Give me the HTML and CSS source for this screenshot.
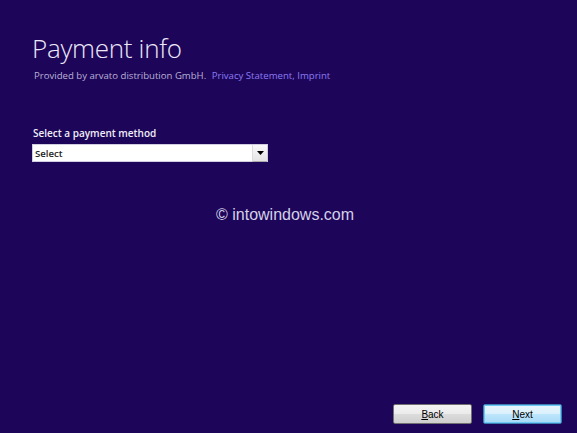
FILE: index.html
```html
<!DOCTYPE html>
<html>
<head>
<meta charset="utf-8">
<link rel="stylesheet" href="styles.css">
</head>
<body>
<div class="page">
  <header class="head">
    <h1 class="title">Payment info</h1>
    <p class="sub">Provided by arvato distribution GmbH. <a class="link">Privacy Statement, Imprint</a></p>
  </header>
  <section class="form">
    <div class="label">Select a payment method</div>
    <div class="combo">
      <span class="combo-text">Select</span>
      <span class="combo-btn"><svg width="7" height="4" viewBox="0 0 7 4"><path d="M0 0H7L3.5 4Z" fill="#000"/></svg></span>
    </div>
  </section>
  <div class="mark">© intowindows.com</div>
  <div class="spacer"></div>
  <footer class="foot">
    <button class="btn"><u>B</u>ack</button>
    <button class="btn btn-primary"><u>N</u>ext</button>
  </footer>
</div>
</body>
</html>
```
FILE: styles.css
```css
html, body {
  margin: 0;
  padding: 0;
  background: #1d0559;
  width: 577px;
  height: 433px;
  overflow: hidden;
}
.page {
  height: 433px;
  display: flex;
  flex-direction: column;
  padding: 0 0 0 32px;
  box-sizing: border-box;
  font-family: "Open Sans", "DejaVu Sans", sans-serif;
}
.head {
  padding-top: 30px;
}
.title {
  margin: 0;
  font-family: "Open Sans", sans-serif;
  font-weight: 300;
  font-size: 26px;
  line-height: 36px;
  color: #ece8f8;
  letter-spacing: -0.3px;
}
.sub {
  margin: 3px 0 0 2px;
  font-size: 9.6px;
  line-height: 13px;
  color: #b9b2d6;
}
.link {
  color: #8b7cf2;
  margin-left: 3px;
}
.form {
  margin-top: 45px;
}
.label {
  font-size: 10px;
  line-height: 13px;
  color: #f0eef8;
  font-weight: 600;
  padding-left: 1px;
}
.combo {
  margin-top: 4px;
  width: 236px;
  height: 18px;
  background: #fff;
  border: 1px solid #cfcfe0;
  box-sizing: border-box;
  display: flex;
  align-items: center;
  justify-content: space-between;
}
.combo-text {
  font-size: 9.6px;
  color: #222;
  padding-left: 2px;
  font-weight: 600;
}
.combo-btn {
  width: 14px;
  height: 16px;
  border-left: 1px solid #ddd;
  background: linear-gradient(#fafafa, #e4e4e4);
  display: flex;
  align-items: center;
  justify-content: center;
  border-bottom: 1px solid #aaa;
}
.mark {
  margin-top: 44px;
  margin-left: 184px;
  font-family: "Liberation Sans", Arial, sans-serif;
  font-size: 16px;
  color: #d4d0e8;
}
.spacer {
  flex: 1;
}
.foot {
  display: flex;
  justify-content: flex-end;
  gap: 11px;
  padding: 0 15px 9px 0;
}
.btn {
  width: 79px;
  height: 20px;
  border: 1px solid #707070;
  border-radius: 2px;
  background: linear-gradient(#f4f4f4 0%, #ebebeb 50%, #dcdcdc 51%, #cfcfcf 100%);
  font-family: "Liberation Sans", Arial, sans-serif;
  font-size: 10px;
  color: #000;
  padding: 0;
}
.btn u {
  text-decoration: underline;
}
.btn-primary {
  border-color: #3c7fb1;
  background: linear-gradient(#eaf6fd 0%, #d9f0fc 50%, #bee6fd 51%, #a7d9f5 100%);
  box-shadow: inset 0 0 0 1px #6fc8f6;
}
```
